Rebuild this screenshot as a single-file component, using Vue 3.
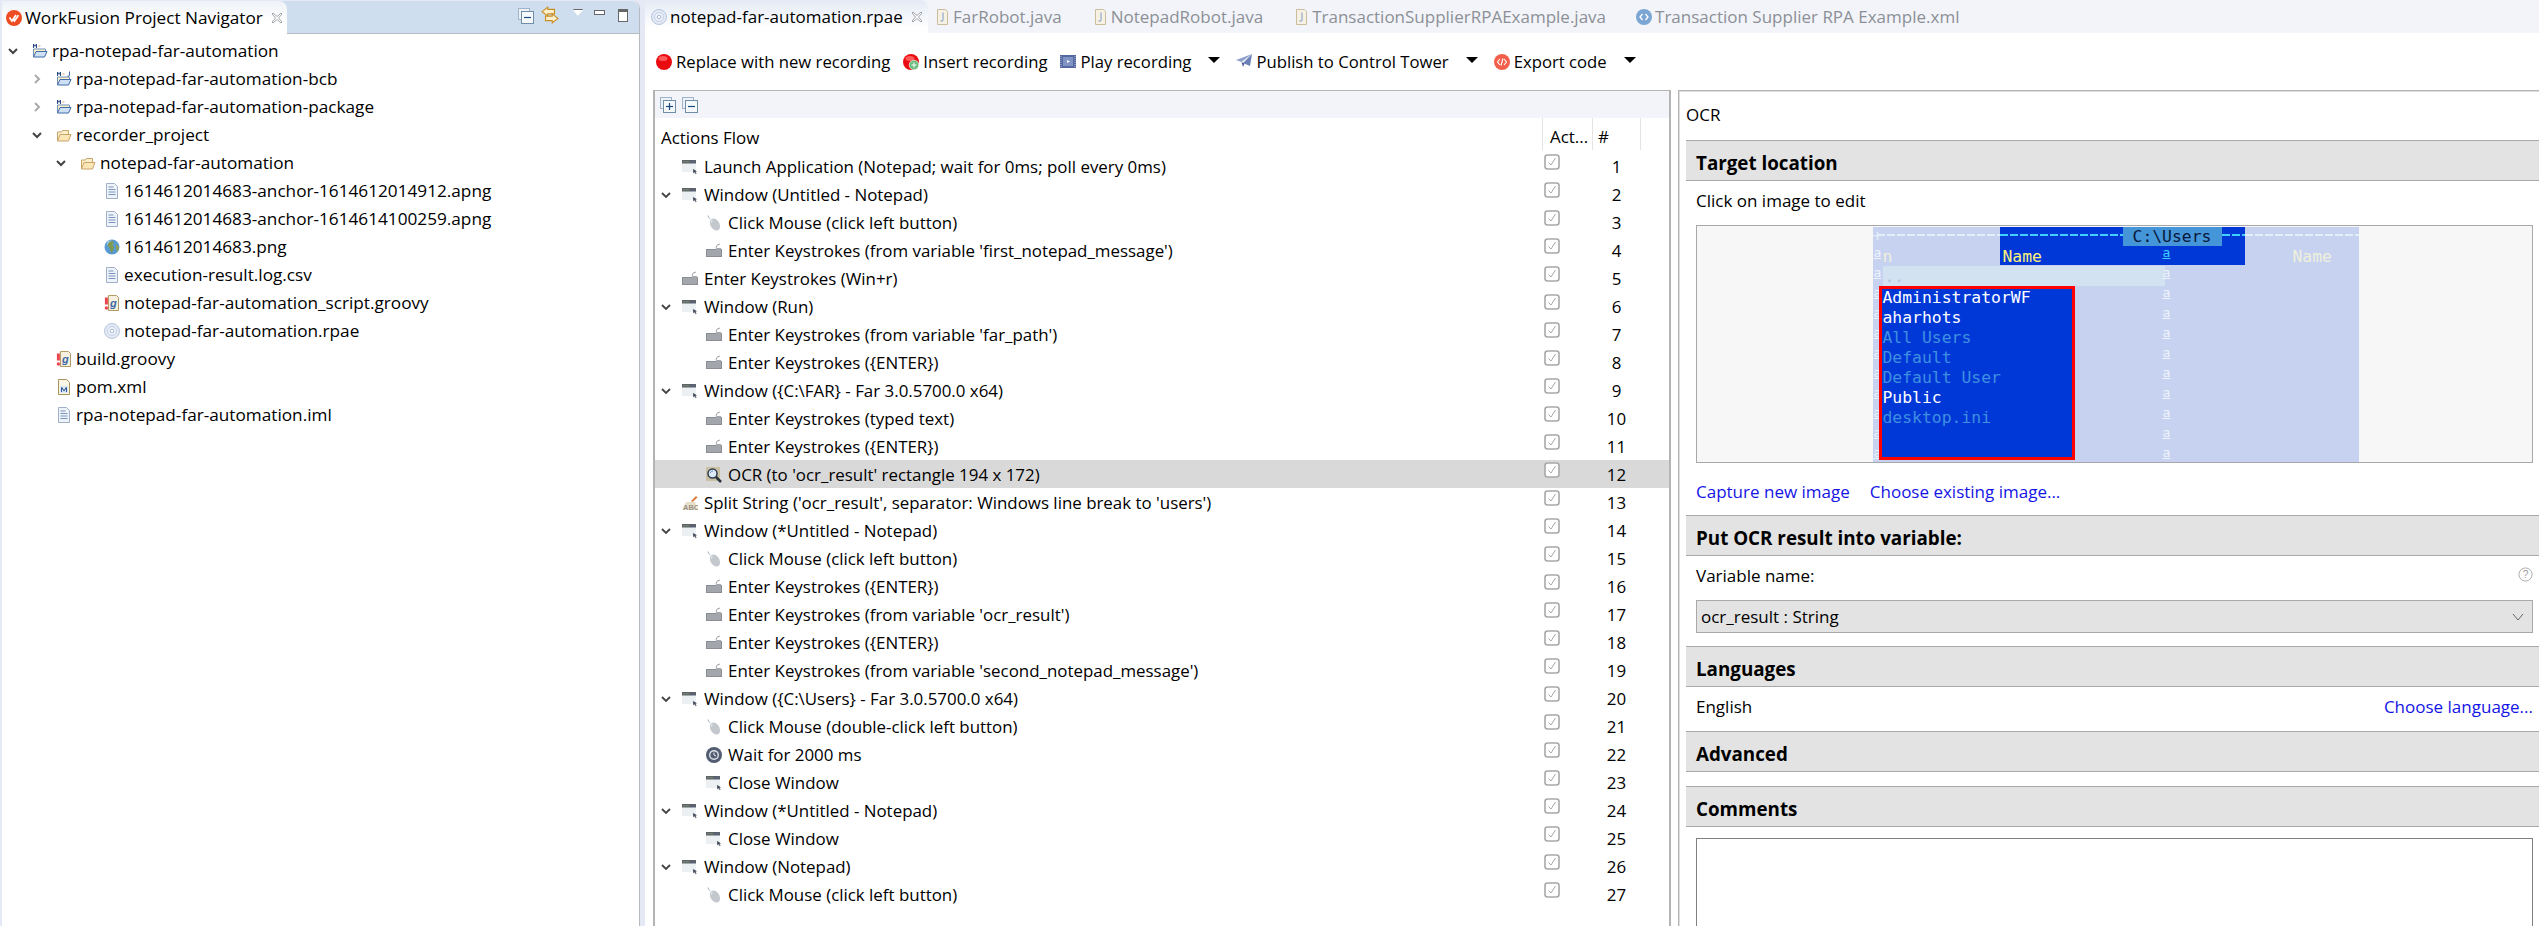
<template>
  <div class="workbench">
    <!-- shared icon sprites -->
    <svg class="sprites" width="0" height="0">
      <defs>
        <symbol id="wf" viewBox="0 0 16 16">
          <circle cx="8" cy="8" r="8" fill="#ee4d23" />
          <path d="M3.5 7.5 6 11l4-6M7 9l1.4 2L12.5 5.2" fill="none" stroke="#fff" stroke-width="1.7" />
        </symbol>
        <symbol id="folder" viewBox="0 0 16 16">
          <path d="M1.5 14V5h4l1-1.500h6V7" fill="#fbeecb" stroke="#c9a468" />
          <path d="M1.500 14 4 7.500h11L12.500 14z" fill="#fbe6b5" stroke="#c9a468" />
        </symbol>
        <symbol id="maven" viewBox="0 0 16 16">
          <path d="M1.500 14V6h12v2" fill="#fcefc8" stroke="#6f91bd" />
          <path d="M1.500 14 4 8.500h11L12.500 14z" fill="#cfe0f4" stroke="#3f6ba8" />
          <path d="M1 1v4h1V2.500L3 4l1-1.500V5h1V1H4L3 2.500 2 1z" fill="#2b4a80" />
          <path d="M6.500 3h2" stroke="#d8a25c" />
        </symbol>
        <symbol id="mavenj" viewBox="0 0 16 16">
          <use href="#maven" />
          <path d="M13.500 .5v3.500q0 1.500-2 1.200" fill="none" stroke="#3f6ba8" />
        </symbol>
        <symbol id="doc" viewBox="0 0 16 16">
          <path d="M2.500 .5h8l3 3v12h-11z" fill="#eef2f9" stroke="#9fb0c8" />
          <path d="M4.500 4h5M4.500 6.500h7M4.500 9h7M4.500 11.500h7" stroke="#7c94c0" />
        </symbol>
        <symbol id="globe" viewBox="0 0 16 16">
          <circle cx="8" cy="8" r="7.500" fill="#5a9ad2" />
          <circle cx="6" cy="4.500" r="3" fill="#9cc6ea" />
          <path d="M6 2.500q3-1 4 .5L8.500 5.500 10 8.500 8 14Q5.500 12 6 9L3.500 6.500Q4 4 6 2.500z" fill="#7f9a4f" />
          <path d="M12 5 14.800 7.500q.2 3.500-2 5.500L12 9z" fill="#8ca05a" />
        </symbol>
        <symbol id="groovy" viewBox="0 0 16 16">
          <path d="M4.500 .5h8l2 2v13h-10z" fill="#f6f0df" stroke="#b09a68" />
          <text x="6" y="12" font-family="Liberation Sans, sans-serif" font-size="11" font-weight="700" font-style="italic" fill="#3a66a8">g</text>
          <path d="M2.400 2.500v7" stroke="#ee4450" stroke-width="3" />
          <circle cx="2.400" cy="13" r="1.700" fill="#ee4450" />
        </symbol>
        <symbol id="disc" viewBox="0 0 16 16">
          <circle cx="8" cy="8" r="7.500" fill="#e3e9f5" stroke="#b6c4de" />
          <circle cx="8" cy="8" r="4.500" fill="#eef2f9" stroke="#c4d0e6" />
          <circle cx="8" cy="8" r="1.800" fill="#fff" stroke="#a8b8d6" />
        </symbol>
        <symbol id="pom" viewBox="0 0 16 16">
          <path d="M2.500 .5h8l3 3v12h-11z" fill="#fbf7e8" stroke="#a8925c" />
          <rect x="4" y="7" width="8" height="7" fill="#dde6f3" />
          <path d="M5 13V8.200h1L8 11l2-2.800h1V13h-1v-3L8 12.500 6 10v3z" fill="#2b5696" />
        </symbol>
        <symbol id="window" viewBox="0 0 16 16">
          <rect x="0" y="1" width="14" height="12" fill="#edf0f3" />
          <rect x="0" y="1" width="14" height="3.500" fill="#59626e" />
          <path d="M1.500 2.800h1" stroke="#e0b040" />
          <path d="M3.500 2.800h1" stroke="#6cc070" />
          <path d="M5.500 2.800h1" stroke="#e0b040" />
          <path d="M11 10l4 2.200-1.600.6 1.200 2-.8.500-1.200-2-1.200 1.200z" fill="#3d4754" />
        </symbol>
        <symbol id="mouse" viewBox="0 0 16 16">
          <path d="M2 .5q0 2 2 3" fill="none" stroke="#a5abb3" />
          <ellipse cx="9" cy="9.500" rx="4.500" ry="6.500" transform="rotate(-30 9 9.500)" fill="#c3c8cf" />
          <path d="M3.500 3.500 7 6 5.500 8z" fill="#dfe2e6" />
        </symbol>
        <symbol id="keys" viewBox="0 0 16 16">
          <path d="M10 5 11 2l3-1" fill="none" stroke="#a4a8ad" />
          <rect x="0" y="6" width="16" height="8" fill="#8b8f95" />
          <path d="M1.500 8h13M1.500 10h13M1.500 12h13" stroke="#eceef0" stroke-dasharray="1 1" />
          <path d="M10 5h5v3h-5z" fill="#a4a8ad" />
        </symbol>
        <symbol id="ocr" viewBox="0 0 16 16">
          <rect x="0" y="0" width="14" height="14" fill="#c9bfa2" />
          <circle cx="6.500" cy="6.500" r="4.500" fill="#dbe9f8" stroke="#303c50" stroke-width="1.500" />
          <path d="M10 10l5 5" stroke="#28303c" stroke-width="2.500" />
          <path d="M4 6q1-2 3-2" fill="none" stroke="#6f93c0" />
        </symbol>
        <symbol id="split" viewBox="0 0 16 16">
          <path d="M9 6l5-5 1.500 1.500L10.500 7z" fill="#d97b3a" />
          <path d="M0 15l4-8h9l3 8z" fill="#e8dfc8" />
          <text x="1" y="15" font-family="Liberation Sans, sans-serif" font-size="7.500" font-weight="700" fill="#9a9488">ABC</text>
        </symbol>
        <symbol id="clock" viewBox="0 0 16 16">
          <circle cx="8" cy="8" r="8" fill="#525d72" />
          <circle cx="8" cy="8" r="5" fill="#dfe3ea" />
          <circle cx="8" cy="8" r="3.600" fill="#525d72" />
          <path d="M8 5.500V8l2 1" fill="none" stroke="#e9ecf1" />
        </symbol>
        <symbol id="rec" viewBox="0 0 16 16">
          <circle cx="8" cy="8" r="8" fill="#ea0b10" />
          <ellipse cx="7" cy="4.500" rx="4.500" ry="2.500" fill="#ff5a5a" />
        </symbol>
        <symbol id="recplus" viewBox="0 0 16 16">
          <use href="#rec" />
          <circle cx="11" cy="11" r="4.800" fill="#6dbd7e" stroke="#fff" stroke-width=".6" />
          <path d="M11 8.500v5M8.500 11h5" stroke="#fff" />
        </symbol>
        <symbol id="play" viewBox="0 0 16 16">
          <rect x="0" y="1" width="16" height="13" fill="#54699f" />
          <rect x="3" y="3" width="10" height="9" fill="#8194c6" />
          <path d="M7 6l3 1.500L7 9z" fill="#fff" />
          <path d="M1 2v11M15 2v11" stroke="#a9b6d6" stroke-dasharray="1 1" />
        </symbol>
        <symbol id="plane" viewBox="0 0 16 16">
          <path d="M0 6 16 0 5.500 8z" fill="#8ea0cc" />
          <path d="M16 0 14 12 7 9z" fill="#6c81b8" />
          <path d="M5.500 8 7 13l1.500-3.500z" fill="#4c5f96" />
        </symbol>
        <symbol id="export" viewBox="0 0 16 16">
          <circle cx="8" cy="8" r="8" fill="#f2604c" />
          <path d="M6 5 3.500 8 6 11M10 5l2.500 3L10 11M9 4.500 7 11.500" fill="none" stroke="#fff" stroke-width="1.100" />
        </symbol>
        <symbol id="java" viewBox="0 0 16 16">
          <path d="M3.500 .5h8l2 2v13h-10z" fill="#f6f1e3" stroke="#c9bd9c" />
          <path d="M9 3.500v7q0 2-2.500 1.500" fill="none" stroke="#9ab0d0" stroke-width="1.300" />
        </symbol>
        <symbol id="xml" viewBox="0 0 16 16">
          <circle cx="8" cy="8" r="8" fill="#7ba6d4" />
          <path d="M6.500 5 4 8l2.500 3M9.500 5 12 8l-2.500 3" fill="none" stroke="#fff" stroke-width="1.300" />
        </symbol>
        <symbol id="collapse" viewBox="0 0 16 16">
          <rect x=".5" y=".5" width="11" height="11" fill="#eef2f8" stroke="#9fb4c8" />
          <rect x="3.500" y="3.500" width="12" height="12" fill="#f6f9fc" stroke="#6f8ea8" />
          <path d="M6 9.500h7" stroke="#1a4a80" stroke-width="1.200" />
        </symbol>
        <symbol id="expand" viewBox="0 0 16 16">
          <use href="#collapse" />
          <path d="M9.500 6v7" stroke="#1a4a80" stroke-width="1.200" />
        </symbol>
        <symbol id="sync" viewBox="0 0 16 16">
          <path d="M1 5 6 1v2h6v4H6v2z" fill="#fbeecb" stroke="#c98f24" />
          <path d="M15 11l-5-4v2H4v4h6v2z" fill="#fbeecb" stroke="#c98f24" />
        </symbol>
        <symbol id="close" viewBox="0 0 12 12">
          <path d="M2 1 6 4.500 10 1l1 1-3.500 4L11 10l-1 1-4-3.500L2 11l-1-1 3.500-4L1 2z" fill="#fff" stroke="#8a8f96" stroke-width=".8" />
        </symbol>
        <symbol id="check" viewBox="0 0 16 16">
          <rect x="1" y="1" width="14" height="14" rx="2.500" fill="#fff" stroke="#a8a8a8" stroke-width="1.600" />
          <path d="M4.500 8.500 7 11l4.500-7" fill="none" stroke="#a8a8a8" />
        </symbol>
      </defs>
    </svg>

    <!-- Project navigator -->
    <section class="navigator">
      <div class="nav-bar">
        <div class="nav-tab">
          <svg class="ic"><use href="#wf" /></svg>
          <span>WorkFusion Project Navigator</span>
          <svg class="ic-close"><use href="#close" /></svg>
        </div>
        <div class="nav-tools">
          <svg class="ic"><use href="#collapse" /></svg>
          <svg class="ic"><use href="#sync" /></svg>
          <span class="view-menu"></span>
          <span class="min-btn"></span>
          <span class="max-btn"></span>
        </div>
      </div>
      <div class="tree">
        <div
          v-for="node in navTree"
          :key="node.label"
          class="tree-row"
          :class="'lvl' + node.level"
        >
          <span class="twisty">
            <svg v-if="node.open !== undefined" width="12" height="12" viewBox="0 0 12 12">
              <path
                :d="node.open ? 'M2 4l4 4 4-4' : 'M4 2l4 4-4 4'"
                fill="none"
                :stroke="node.open ? '#444' : '#aaa'"
                stroke-width="2"
              />
            </svg>
          </span>
          <svg class="ic"><use :href="'#' + node.icon" /></svg>
          <span class="tree-label">{{ node.label }}</span>
        </div>
      </div>
    </section>

    <!-- Recording editor -->
    <section class="editor">
      <div class="editor-tabs">
        <div class="editor-tab active">
          <svg class="ic"><use href="#disc" /></svg>
          <span>notepad-far-automation.rpae</span>
          <svg class="ic-close"><use href="#close" /></svg>
        </div>
        <div v-for="tab in editorTabs" :key="tab.label" class="editor-tab">
          <svg class="ic"><use :href="'#' + tab.icon" /></svg>
          <span>{{ tab.label }}</span>
        </div>
      </div>

      <div class="toolbar">
        <div class="tool"><svg class="ic"><use href="#rec" /></svg>Replace with new recording</div>
        <div class="tool"><svg class="ic"><use href="#recplus" /></svg>Insert recording</div>
        <div class="tool"><svg class="ic"><use href="#play" /></svg>Play recording<span class="drop"></span></div>
        <div class="tool"><svg class="ic"><use href="#plane" /></svg>Publish to Control Tower<span class="drop"></span></div>
        <div class="tool"><svg class="ic"><use href="#export" /></svg>Export code<span class="drop"></span></div>
      </div>

      <div class="editor-body">
        <div class="flow-panel">
          <div class="flow-strip">
            <svg class="ic"><use href="#expand" /></svg>
            <svg class="ic"><use href="#collapse" /></svg>
          </div>
          <div class="flow-head">
            <div class="col-main">Actions Flow</div>
            <div class="col-act">Act...</div>
            <div class="col-num">#</div>
          </div>
          <div
            v-for="(row, i) in flowRows"
            :key="i"
            class="flow-row"
            :class="{ selected: i === 11 }"
          >
            <div class="flow-main" :class="{ nested: row.nested }">
              <span class="twisty-flow">
                <svg v-if="row.open" width="12" height="12" viewBox="0 0 12 12">
                  <path d="M2 4l4 4 4-4" fill="none" stroke="#444" stroke-width="1.800" />
                </svg>
              </span>
              <svg class="ic"><use :href="'#' + row.icon" /></svg>
              <span class="flow-label">{{ row.label }}</span>
            </div>
            <div class="flow-check"><svg class="ic"><use href="#check" /></svg></div>
            <div class="flow-num">{{ i + 1 }}</div>
          </div>
        </div>

        <div class="props-panel">
          <div class="props-title">OCR</div>

          <div class="sec-head">Target location</div>
          <div class="sec-body target">
            <p class="line">Click on image to edit</p>
            <div class="image-box">
              <div class="terminal">
                <div class="dash dash-a"></div>
                <div class="dash dash-b"></div>
                <div class="dash dash-c"></div>
                <div class="dash dash-d"></div>
                <div class="term-blue"></div>
                <div class="term-title">C:\Users</div>
                <div class="term-name yellow">Name</div>
                <div class="term-name pale">Name</div>
                <div class="term-n">n</div>
                <div class="term-plus">+</div>
                <div class="term-updir">..</div>
                <div class="col-a col-a-left"><u v-for="n in 11" :key="n">a</u></div>
                <div class="col-a col-a-mid"><u v-for="n in 11" :key="n">a</u></div>
                <div class="term-list">
                  <div v-for="f in farFiles" :key="f.name" :class="{ dim: f.dim }">{{ f.name }}</div>
                </div>
              </div>
            </div>
            <div class="links">
              <a>Capture new image</a>
              <a>Choose existing image...</a>
            </div>
          </div>

          <div class="sec-head">Put OCR result into variable:</div>
          <div class="sec-body variable">
            <div class="line between">
              <span>Variable name:</span>
              <svg class="help" viewBox="0 0 16 16">
                <circle cx="8" cy="8" r="7" fill="none" stroke="#aaa" />
                <text x="8" y="12" text-anchor="middle" font-family="Liberation Sans, sans-serif" font-size="11" fill="#999">?</text>
              </svg>
            </div>
            <div class="select-box">
              <span>ocr_result : String</span>
              <svg width="12" height="12" viewBox="0 0 12 12">
                <path d="M1 3l5 6 5-6" fill="none" stroke="#666" />
              </svg>
            </div>
          </div>

          <div class="sec-head">Languages</div>
          <div class="sec-body languages">
            <div class="line between">
              <span>English</span>
              <a>Choose language...</a>
            </div>
          </div>

          <div class="sec-head">Advanced</div>
          <div class="sec-gap"></div>

          <div class="sec-head">Comments</div>
          <div class="sec-body comments">
            <div class="comment-box"></div>
          </div>
        </div>
      </div>
    </section>
  </div>
</template>

<script setup>
const navTree = [
  { label: 'rpa-notepad-far-automation', level: 0, open: true, icon: 'maven' },
  { label: 'rpa-notepad-far-automation-bcb', level: 1, open: false, icon: 'mavenj' },
  { label: 'rpa-notepad-far-automation-package', level: 1, open: false, icon: 'maven' },
  { label: 'recorder_project', level: 1, open: true, icon: 'folder' },
  { label: 'notepad-far-automation', level: 2, open: true, icon: 'folder' },
  { label: '1614612014683-anchor-1614612014912.apng', level: 3, icon: 'doc' },
  { label: '1614612014683-anchor-1614614100259.apng', level: 3, icon: 'doc' },
  { label: '1614612014683.png', level: 3, icon: 'globe' },
  { label: 'execution-result.log.csv', level: 3, icon: 'doc' },
  { label: 'notepad-far-automation_script.groovy', level: 3, icon: 'groovy' },
  { label: 'notepad-far-automation.rpae', level: 3, icon: 'disc' },
  { label: 'build.groovy', level: 1, icon: 'groovy' },
  { label: 'pom.xml', level: 1, icon: 'pom' },
  { label: 'rpa-notepad-far-automation.iml', level: 1, icon: 'doc' }
]

const editorTabs = [
  { label: 'FarRobot.java', icon: 'java' },
  { label: 'NotepadRobot.java', icon: 'java' },
  { label: 'TransactionSupplierRPAExample.java', icon: 'java' },
  { label: 'Transaction Supplier RPA Example.xml', icon: 'xml' }
]

const flowRows = [
  { label: 'Launch Application (Notepad; wait for 0ms; poll every 0ms)', icon: 'window' },
  { label: 'Window (Untitled - Notepad)', icon: 'window', open: true },
  { label: 'Click Mouse (click left button)', icon: 'mouse', nested: true },
  { label: "Enter Keystrokes (from variable 'first_notepad_message')", icon: 'keys', nested: true },
  { label: 'Enter Keystrokes (Win+r)', icon: 'keys' },
  { label: 'Window (Run)', icon: 'window', open: true },
  { label: "Enter Keystrokes (from variable 'far_path')", icon: 'keys', nested: true },
  { label: 'Enter Keystrokes ({ENTER})', icon: 'keys', nested: true },
  { label: 'Window ({C:\\FAR} - Far 3.0.5700.0 x64)', icon: 'window', open: true },
  { label: 'Enter Keystrokes (typed text)', icon: 'keys', nested: true },
  { label: 'Enter Keystrokes ({ENTER})', icon: 'keys', nested: true },
  { label: "OCR (to 'ocr_result' rectangle 194 x 172)", icon: 'ocr', nested: true },
  { label: "Split String ('ocr_result', separator: Windows line break to 'users')", icon: 'split' },
  { label: 'Window (*Untitled - Notepad)', icon: 'window', open: true },
  { label: 'Click Mouse (click left button)', icon: 'mouse', nested: true },
  { label: 'Enter Keystrokes ({ENTER})', icon: 'keys', nested: true },
  { label: "Enter Keystrokes (from variable 'ocr_result')", icon: 'keys', nested: true },
  { label: 'Enter Keystrokes ({ENTER})', icon: 'keys', nested: true },
  { label: "Enter Keystrokes (from variable 'second_notepad_message')", icon: 'keys', nested: true },
  { label: 'Window ({C:\\Users} - Far 3.0.5700.0 x64)', icon: 'window', open: true },
  { label: 'Click Mouse (double-click left button)', icon: 'mouse', nested: true },
  { label: 'Wait for 2000 ms', icon: 'clock', nested: true },
  { label: 'Close Window', icon: 'window', nested: true },
  { label: 'Window (*Untitled - Notepad)', icon: 'window', open: true },
  { label: 'Close Window', icon: 'window', nested: true },
  { label: 'Window (Notepad)', icon: 'window', open: true },
  { label: 'Click Mouse (click left button)', icon: 'mouse', nested: true }
]

const farFiles = [
  { name: 'AdministratorWF' },
  { name: 'aharhots' },
  { name: 'All Users', dim: true },
  { name: 'Default', dim: true },
  { name: 'Default User', dim: true },
  { name: 'Public' },
  { name: 'desktop.ini', dim: true }
]
</script>

<style>
html,
body {
  margin: 0;
  background: #e4e9f5;
}
</style>

<style scoped>
.workbench {
  display: flex;
  width: 2539px;
  height: 926px;
  overflow: hidden;
  background: #e4e9f5;
  font-family: "Open Sans", "Noto Sans", sans-serif;
  font-size: 17.2px;
  color: #000;
}

.sprites {
  position: absolute;
}

.ic {
  width: 16px;
  height: 16px;
  flex-shrink: 0;
}

.ic-close {
  width: 12px;
  height: 12px;
  flex-shrink: 0;
}

/* Navigator */
.navigator {
  width: 637px;
  margin: 1px 0 0 2px;
  background: #fff;
  border-right: 1px solid #b6bbc2;
  border-top-right-radius: 8px;
}

.nav-bar {
  display: flex;
  justify-content: space-between;
  height: 33px;
  background: #cfdeee;
  border-bottom: 1px solid #b6bbc2;
  box-sizing: border-box;
  border-top-right-radius: 8px;
}

.nav-tab {
  display: flex;
  align-items: center;
  gap: 3px;
  width: 285px;
  height: 33px;
  padding-left: 4px;
  box-sizing: border-box;
  background: linear-gradient(#eef2f8, #fff 60%);
  border-top-right-radius: 8px;
  white-space: nowrap;
}

.nav-tab .ic-close {
  margin-left: 5px;
}

.nav-tools {
  display: flex;
  align-items: flex-start;
  padding: 7px 11px 0 0;
}

.nav-tools .ic:nth-child(2) {
  margin-left: 7px;
  margin-top: -2px;
  height: 18px;
  width: 18px;
}

.view-menu {
  width: 0;
  height: 0;
  margin: 2px 0 0 14px;
  border-left: 5px solid transparent;
  border-right: 5px solid transparent;
  border-top: 6px solid #fff;
  filter: drop-shadow(0 -1px 0 #666);
}

.min-btn {
  width: 9px;
  height: 3px;
  margin: 2px 0 0 11px;
  border: 1px solid #666;
  background: #fff;
}

.max-btn {
  width: 8px;
  height: 9px;
  margin: 1px 0 0 13px;
  border: 1px solid #666;
  border-top-width: 3px;
  background: #fff;
}

.tree {
  padding-top: 3px;
}

.tree-row {
  display: flex;
  align-items: center;
  height: 28px;
  white-space: nowrap;
}

.tree-row.lvl1 {
  padding-left: 24px;
}

.tree-row.lvl2 {
  padding-left: 48px;
}

.tree-row.lvl3 {
  padding-left: 72px;
}

.twisty {
  display: flex;
  justify-content: center;
  width: 26px;
  padding-right: 4px;
  box-sizing: border-box;
  margin-right: 4px;
}

.tree-label {
  margin-left: 4px;
  margin-bottom: 1px;
}

/* Editor */
.editor {
  flex: 1;
  margin-left: 5px;
  background: #fff;
  min-width: 0;
  display: flex;
  flex-direction: column;
}

.editor-tabs {
  display: flex;
  height: 33px;
  background: #f2f4f9;
  flex-shrink: 0;
  white-space: nowrap;
  font-size: 17px;
}

.editor-tab {
  display: flex;
  align-items: center;
  gap: 3px;
  margin-right: 30px;
  color: #8c9096;
}

.editor-tab.active {
  width: 283px;
  box-sizing: border-box;
  padding-left: 6px;
  margin-right: 6px;
  color: #000;
  background: linear-gradient(#e4eaf5, #fff 85%);
  border-top-right-radius: 8px;
}

.editor-tab.active .ic-close {
  margin-left: 5px;
}

.toolbar {
  display: flex;
  align-items: center;
  gap: 13px;
  height: 57px;
  padding: 0 0 0 11px;
  flex-shrink: 0;
  box-sizing: border-box;
  white-space: nowrap;
  font-size: 16.7px;
}

.tool {
  display: flex;
  align-items: center;
  gap: 4px;
}

.drop {
  width: 0;
  height: 0;
  margin: -4px 3px 0 13px;
  border-left: 6px solid transparent;
  border-right: 6px solid transparent;
  border-top: 6px solid #000;
}

.editor-body {
  flex: 1;
  display: flex;
  padding-left: 8px;
  gap: 7px;
  min-height: 0;
}

.flow-panel {
  width: 1018px;
  box-sizing: border-box;
  border: solid #b4b4b4;
  border-width: 1px 2px 0;
  flex-shrink: 0;
  font-size: 16.9px;
}

.flow-strip {
  display: flex;
  align-items: center;
  gap: 6px;
  height: 27px;
  padding-left: 5px;
  background: #f2f4f9;
}

.flow-head {
  display: grid;
  grid-template-columns: 887px 50px 49px;
  height: 34px;
  line-height: 39px;
}

.col-main {
  padding-left: 6px;
}

.col-act,
.col-num {
  border-left: 1px solid #e4e4e4;
  height: 32px;
  padding-left: 7px;
  line-height: 37px;
  box-sizing: border-box;
  overflow: hidden;
  white-space: nowrap;
}

.col-num {
  border-right: 1px solid #e4e4e4;
  padding-left: 5px;
}

.flow-row {
  display: grid;
  grid-template-columns: 887px 50px 49px;
  height: 28px;
  white-space: nowrap;
}

.flow-row.selected {
  background: #d9d9d9;
}

.flow-main {
  display: flex;
  align-items: center;
}

.flow-main.nested {
  padding-left: 24px;
}

.twisty-flow {
  display: flex;
  justify-content: center;
  width: 27px;
  padding-right: 5px;
  box-sizing: border-box;
}

.flow-label {
  margin-left: 6px;
  margin-bottom: 1px;
}

.flow-check {
  padding-left: 2px;
}

.flow-num {
  text-align: center;
  line-height: 29px;
}

/* Properties */
.props-panel {
  flex: 1;
  min-width: 0;
  border-left: 1px solid #b4b4b4;
  border-top: 1px solid #b4b4b4;
  box-shadow: inset 1px 1px 0 #dedede;
  padding-left: 7px;
  overflow: hidden;
  font-size: 17px;
}

.props-title {
  height: 49px;
  line-height: 48px;
}

.sec-head {
  height: 41px;
  box-sizing: border-box;
  padding-left: 10px;
  background: #e3e3e3;
  border: solid #a9a9a9;
  border-width: 1px 0;
  font-size: 18.8px;
  font-weight: 700;
  line-height: 44px;
}

.sec-body {
  padding: 0 6px 0 10px;
}

.line {
  margin: 0;
  height: 22px;
  line-height: 22px;
}

.between {
  display: flex;
  justify-content: space-between;
  align-items: center;
}

a {
  color: #1414e6;
}

.target {
  height: 334px;
  padding-top: 9px;
  box-sizing: border-box;
}

.image-box {
  display: flex;
  justify-content: center;
  height: 238px;
  margin-top: 13px;
  box-sizing: border-box;
  padding-top: 1px;
  padding-left: 2px;
  background: #f7f7f7;
  border: 1px solid #a8a8a8;
}

.links {
  display: flex;
  gap: 20px;
  margin-top: 18px;
  line-height: 22px;
}

.variable {
  height: 90px;
  padding-top: 9px;
  box-sizing: border-box;
}

.help {
  width: 15px;
  height: 15px;
  margin-top: -4px;
}

.select-box {
  display: flex;
  justify-content: space-between;
  align-items: center;
  height: 33px;
  margin-top: 13px;
  padding: 0 8px 0 4px;
  box-sizing: border-box;
  background: #e3e3e3;
  border: 1px solid #a9a9a9;
}

.languages {
  height: 44px;
  padding-top: 9px;
  box-sizing: border-box;
}

.sec-gap {
  height: 14px;
}

.comments {
  padding-top: 11px;
}

.comment-box {
  height: 200px;
  background: #fff;
  border: 1px solid #808080;
}

/* Far manager capture inside the image preview */
.terminal {
  position: relative;
  width: 486px;
  height: 235px;
  background: #c7d2f0;
  overflow: hidden;
  font-family: "DejaVu Sans Mono", "Liberation Mono", monospace;
  font-size: 16.4px;
  color: #fff;
}

.term-blue {
  position: absolute;
  left: 127px;
  top: 0;
  width: 245px;
  height: 38px;
  background: #0038d8;
}

.dash {
  position: absolute;
  top: 7px;
  height: 2px;
  background: repeating-linear-gradient(90deg, #e4eef6 0 8px, transparent 8px 10px);
  z-index: 1;
}

.dash-a {
  left: 4px;
  width: 123px;
}

.dash-b {
  left: 127px;
  width: 123px;
  background: repeating-linear-gradient(90deg, #3fd0ff 0 8px, transparent 8px 10px);
}

.dash-c {
  left: 349px;
  width: 23px;
  background: repeating-linear-gradient(90deg, #3fd0ff 0 8px, transparent 8px 10px);
}

.dash-d {
  left: 372px;
  width: 114px;
}

.term-title {
  position: absolute;
  left: 250px;
  top: 0;
  width: 99px;
  height: 19px;
  line-height: 19px;
  text-align: center;
  background: #4496d8;
  color: #08183a;
  z-index: 1;
}

.term-name {
  position: absolute;
  top: 20px;
  line-height: 20px;
}

.term-name.yellow {
  left: 130px;
  color: #fff27a;
}

.term-name.pale {
  left: 420px;
  color: #eef0dc;
}

.term-n {
  position: absolute;
  left: 10px;
  top: 20px;
  line-height: 20px;
  color: #eef0dc;
}

.term-plus {
  position: absolute;
  left: 0;
  top: -1px;
  line-height: 20px;
  color: #e4eef6;
}

.term-updir {
  position: absolute;
  left: 10px;
  top: 39px;
  width: 280px;
  height: 20px;
  padding-left: 2px;
  background: #d2e2f0;
  color: #b4c4e0;
  line-height: 22px;
}

.col-a {
  position: absolute;
  top: 16px;
  display: flex;
  flex-direction: column;
  font-size: 13px;
  color: #eef2fc;
}

.col-a u {
  height: 20px;
  line-height: 20px;
}

.col-a-left {
  left: 1px;
}

.col-a-mid {
  left: 290px;
}

.col-a-mid u:first-child {
  color: #3fd0ff;
}

.term-list {
  position: absolute;
  left: 6px;
  top: 59px;
  width: 196px;
  height: 174px;
  padding: 0 0 0 1px;
  box-sizing: border-box;
  background: #0038d8;
  border: 3px solid #f00;
  line-height: 20px;
  z-index: 2;
}

.term-list > div:first-child {
  margin-top: -1px;
}

.term-list .dim {
  color: #3f8fe0;
}
</style>
